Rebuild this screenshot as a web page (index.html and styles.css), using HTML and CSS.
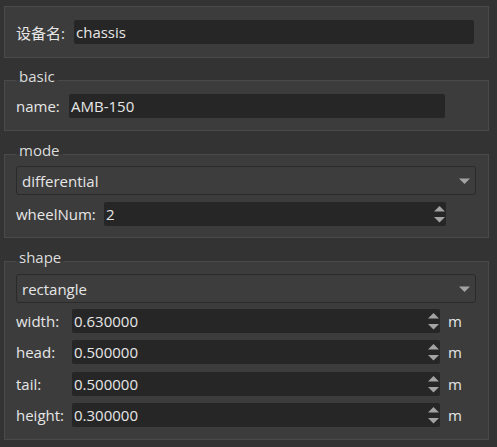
FILE: index.html
```html
<!DOCTYPE html>
<html lang="zh">
<head>
<meta charset="utf-8">
<title>chassis</title>
<link rel="stylesheet" href="styles.css">
</head>
<body>
<div class="page">
  <div class="group plain">
    <div class="row">
      <span class="label w-dev">设备名:</span>
      <div class="edit grow">chassis</div>
    </div>
  </div>

  <fieldset class="group g-basic">
    <legend>basic</legend>
    <div class="row">
      <span class="label w-name">name:</span>
      <div class="edit w376">AMB-150</div>
    </div>
  </fieldset>

  <fieldset class="group g-mode">
    <legend>mode</legend>
    <div class="combo">
      <span class="combo-text">differential</span>
      <svg class="combo-arrow" width="11" height="6" viewBox="0 0 11 6"><path d="M0 0.5 H11 L5.5 6 Z" fill="#a3a3a3"/></svg>
    </div>
    <div class="row">
      <span class="label w-wheel">wheelNum:</span>
      <div class="spin w342">
        <span class="spin-text">2</span>
        <svg class="spin-arrows" width="11" height="24" viewBox="0 0 11 24"><path d="M0 9.5 L5.5 4 L11 9.5 Z" fill="#a3a3a3"/><path d="M0 15 H11 L5.5 20.5 Z" fill="#a3a3a3"/></svg>
      </div>
    </div>
  </fieldset>

  <fieldset class="group g-shape">
    <legend>shape</legend>
    <div class="combo">
      <span class="combo-text">rectangle</span>
      <svg class="combo-arrow" width="11" height="6" viewBox="0 0 11 6"><path d="M0 0.5 H11 L5.5 6 Z" fill="#a3a3a3"/></svg>
    </div>
    <div class="spin-list">
      <div class="row">
        <span class="label w-shape">width:</span>
        <div class="spin w368">
          <span class="spin-text">0.630000</span>
          <svg class="spin-arrows" width="11" height="24" viewBox="0 0 11 24"><path d="M0 9.5 L5.5 4 L11 9.5 Z" fill="#a3a3a3"/><path d="M0 15 H11 L5.5 20.5 Z" fill="#a3a3a3"/></svg>
        </div>
        <span class="unit">m</span>
      </div>
      <div class="row">
        <span class="label w-shape">head:</span>
        <div class="spin w368">
          <span class="spin-text">0.500000</span>
          <svg class="spin-arrows" width="11" height="24" viewBox="0 0 11 24"><path d="M0 9.5 L5.5 4 L11 9.5 Z" fill="#a3a3a3"/><path d="M0 15 H11 L5.5 20.5 Z" fill="#a3a3a3"/></svg>
        </div>
        <span class="unit">m</span>
      </div>
      <div class="row">
        <span class="label w-shape">tail:</span>
        <div class="spin w368">
          <span class="spin-text">0.500000</span>
          <svg class="spin-arrows" width="11" height="24" viewBox="0 0 11 24"><path d="M0 9.5 L5.5 4 L11 9.5 Z" fill="#a3a3a3"/><path d="M0 15 H11 L5.5 20.5 Z" fill="#a3a3a3"/></svg>
        </div>
        <span class="unit">m</span>
      </div>
      <div class="row">
        <span class="label w-shape">height:</span>
        <div class="spin w368">
          <span class="spin-text">0.300000</span>
          <svg class="spin-arrows" width="11" height="24" viewBox="0 0 11 24"><path d="M0 9.5 L5.5 4 L11 9.5 Z" fill="#a3a3a3"/><path d="M0 15 H11 L5.5 20.5 Z" fill="#a3a3a3"/></svg>
        </div>
        <span class="unit">m</span>
      </div>
    </div>
  </fieldset>
</div>
</body>
</html>
```

FILE: styles.css
```css
html, body {
  margin: 0;
  padding: 0;
  background: #333333;
}

body {
  font-family: "Open Sans", "Noto Sans CJK SC", sans-serif;
  font-size: 15px;
  color: #e6e6e6;
}

.page {
  display: flex;
  flex-direction: column;
  padding: 6px 8px 0 4px;
  width: 485px;
}

.group {
  margin: 0;
  min-width: 0;
  background: #3c3c3c;
  border: 1px solid #4a4a4a;
  display: flex;
  flex-direction: column;
}

.plain {
  padding: 13px 14px 13px 11px;
}

.group legend {
  margin: 0;
  padding: 0 3px 8px 3px;
  line-height: 11px;
  color: #dcdcdc;
}

fieldset.group {
  padding-left: 11px;
  padding-right: 12px;
}

.g-basic {
  margin-top: 13px;
  padding-top: 4px;
  padding-bottom: 12px;
}

.g-mode {
  margin-top: 14px;
  padding-top: 2px;
  padding-bottom: 11px;
  gap: 7px;
}

.g-shape {
  margin-top: 14px;
  padding-top: 3px;
  padding-bottom: 12px;
  gap: 6px;
}

.row {
  display: flex;
  align-items: center;
  height: 24px;
}

.label {
  flex: 0 0 auto;
  white-space: nowrap;
  color: #e6e6e6;
}

.w-dev { width: 58px; }
.w-name { width: 53px; }
.w-wheel { width: 88px; }
.w-shape { width: 56px; }

.edit {
  height: 24px;
  line-height: 24px;
  box-sizing: border-box;
  background: #262626;
  border-radius: 2px;
  padding-left: 2px;
  white-space: nowrap;
}

.grow { flex: 1 1 auto; }
.w376 { width: 376px; }
.w342 { width: 342px; }
.w368 { width: 368px; }

.combo {
  height: 29px;
  box-sizing: border-box;
  border: 1px solid #2a2a2a;
  border-radius: 3px;
  background: #3d3d3d;
  display: flex;
  align-items: center;
  padding: 0 5px 0 5px;
}

.combo-text {
  flex: 1 1 auto;
}

.combo-arrow {
  display: block;
  flex: 0 0 auto;
}

.spin {
  height: 24px;
  box-sizing: border-box;
  background: #262626;
  border-radius: 2px;
  display: flex;
  align-items: center;
  padding: 0 1px 0 2px;
}

.spin-text {
  flex: 1 1 auto;
  line-height: 24px;
}

.spin-arrows {
  display: block;
  flex: 0 0 auto;
}

.spin-list {
  display: flex;
  flex-direction: column;
  gap: 7.35px;
}

.unit {
  margin-left: 8px;
  color: #e6e6e6;
}
```
